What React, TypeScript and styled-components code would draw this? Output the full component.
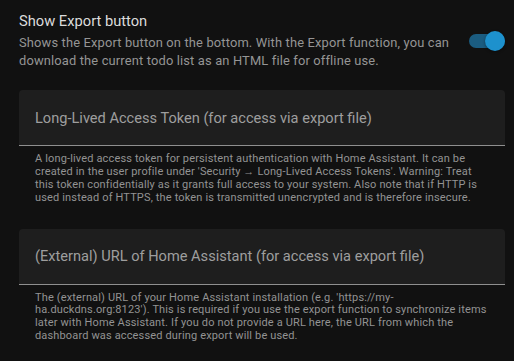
import React from "react";
import styled, { createGlobalStyle } from "styled-components";

const GlobalStyle = createGlobalStyle`
  html, body {
    margin: 0;
    padding: 0;
    background-color: #111111;
  }
  body {
    font-family: Roboto, "Noto Sans", sans-serif;
    -webkit-font-smoothing: antialiased;
  }
`;

const Page = styled.div`
  padding: 10px 9px 0 19px;
  display: flex;
  flex-direction: column;
`;

const SettingsRow = styled.div`
  display: flex;
  align-items: center;
  gap: 16px;
`;

const RowText = styled.div`
  flex: 1;
`;

const RowTitle = styled.div`
  font-size: 14.7px;
  line-height: 22px;
  color: #dcdcdc;
`;

const RowDescription = styled.div`
  font-size: 12.9px;
  line-height: 17.7px;
  color: #959595;
  letter-spacing: 0.15px;
  padding-top: 2px;
`;

const SwitchTrack = styled.div<{ $on: boolean }>`
  position: relative;
  width: 36px;
  height: 14px;
  border-radius: 7px;
  background-color: ${(p) => (p.$on ? "#1b5c80" : "#5f5f5f")};
  flex-shrink: 0;
  margin-top: 2px;
`;

const SwitchThumb = styled.div<{ $on: boolean }>`
  position: absolute;
  top: -3px;
  left: ${(p) => (p.$on ? "16px" : "0")};
  width: 20px;
  height: 20px;
  border-radius: 50%;
  background-color: ${(p) => (p.$on ? "#1d91cd" : "#bdbdbd")};
  box-shadow: 0 1px 3px rgba(0, 0, 0, 0.4);
`;

const Field = styled.div`
  margin-top: 21px;
  display: flex;
  flex-direction: column;

  & + & {
    margin-top: 24px;
  }
`;

const FieldBox = styled.div`
  height: 55px;
  background-color: #1e1e1e;
  border-radius: 4px 4px 0 0;
  border-bottom: 1px solid #8f8f8f;
  display: flex;
  align-items: center;
  padding: 0 16px;
`;

const FieldLabel = styled.span`
  font-size: 14.6px;
  line-height: 22px;
  color: #9e9e9e;
`;

const HelperText = styled.div`
  padding: 7px 16px 0;
  font-size: 11px;
  line-height: 12.8px;
  color: #939393;
  letter-spacing: 0.15px;
`;

const Switch: React.FC<{ on: boolean }> = ({ on }) => (
  <SwitchTrack $on={on}>
    <SwitchThumb $on={on} />
  </SwitchTrack>
);

const TextField: React.FC<{ label: string; helper: string }> = ({ label, helper }) => (
  <Field>
    <FieldBox>
      <FieldLabel>{label}</FieldLabel>
    </FieldBox>
    <HelperText>{helper}</HelperText>
  </Field>
);

const App: React.FC = () => {
  return (
    <>
      <GlobalStyle />
      <Page>
        <SettingsRow>
          <RowText>
            <RowTitle>Show Export button</RowTitle>
            <RowDescription>
              Shows the Export button on the bottom. With the Export function, you can
              download the current todo list as an HTML file for offline use.
            </RowDescription>
          </RowText>
          <Switch on />
        </SettingsRow>
        <TextField
          label="Long-Lived Access Token (for access via export file)"
          helper="A long-lived access token for persistent authentication with Home Assistant. It can be created in the user profile under 'Security → Long-Lived Access Tokens'. Warning: Treat this token confidentially as it grants full access to your system. Also note that if HTTP is used instead of HTTPS, the token is transmitted unencrypted and is therefore insecure."
        />
        <TextField
          label="(External) URL of Home Assistant (for access via export file)"
          helper="The (external) URL of your Home Assistant installation (e.g. 'https://my-ha.duckdns.org:8123'). This is required if you use the export function to synchronize items later with Home Assistant. If you do not provide a URL here, the URL from which the dashboard was accessed during export will be used."
        />
      </Page>
    </>
  );
};

export default App;
